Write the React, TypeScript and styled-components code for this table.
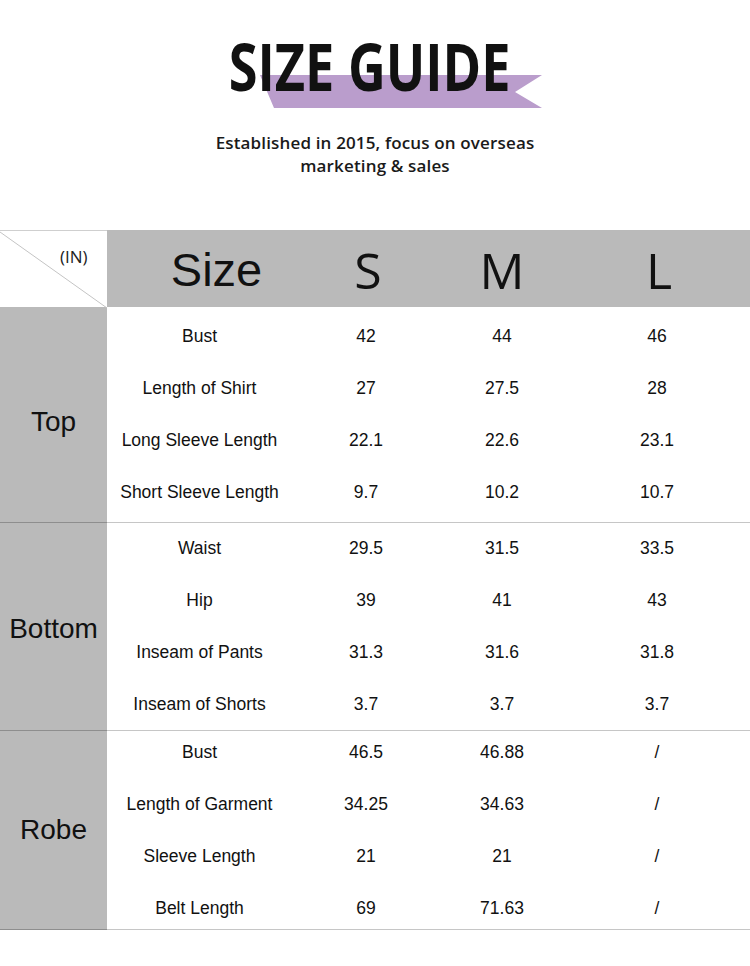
import styled, { createGlobalStyle } from 'styled-components';

const GlobalStyle = createGlobalStyle`
  html, body {
    margin: 0;
    padding: 0;
    background: #ffffff;
  }
  body {
    font-family: "Liberation Sans", Arial, sans-serif;
    color: #111111;
  }
`;

const Page = styled.div`
  width: 750px;
  height: 966px;
  overflow: hidden;
  background: #ffffff;
`;

const Heading = styled.div`
  position: relative;
  height: 99px;
  padding-top: 32px;
  box-sizing: border-box;
  text-align: center;
`;

const Ribbon = styled.svg`
  position: absolute;
  left: 0;
  top: 0;
  width: 750px;
  height: 120px;
`;

const Title = styled.h1`
  position: relative;
  margin: 0;
  display: inline-block;
  font-family: "Open Sans", "Noto Sans", sans-serif;
  font-weight: 700;
  font-size: 67px;
  line-height: 67px;
  color: #111111;
  transform: translateX(-5px) scaleX(0.78);
  transform-origin: 50% 50%;
`;

const Subtitle = styled.p`
  margin: 32px 0 0;
  text-align: center;
  font-family: "Open Sans", "Noto Sans", sans-serif;
  font-weight: 600;
  font-size: 17px;
  letter-spacing: 0.15px;
  line-height: 23px;
  color: #1a1a1a;
`;

const Table = styled.div`
  margin-top: 53px;
  width: 750px;
`;

const cols = '185px 148px 124px 186px';

const HeaderRow = styled.div`
  display: grid;
  grid-template-columns: 107px ${cols};
  height: 77px;
  background: #bababa;
`;

const Corner = styled.div`
  position: relative;
  background: #ffffff;
  border-top: 1px solid #cfcfcf;
`;

const Diagonal = styled.svg`
  position: absolute;
  left: 0;
  top: 0;
  width: 107px;
  height: 77px;
`;

const Unit = styled.span`
  position: absolute;
  left: 60px;
  top: 14px;
  font-family: "Open Sans", "Noto Sans", sans-serif;
  font-size: 17px;
  color: #222222;
`;

const HeadCell = styled.div<{ shift?: number; serif?: boolean }>`
  display: flex;
  align-items: center;
  justify-content: center;
  padding-left: ${({ shift }) => (shift ? `${shift}px` : '0')};
  font-family: ${({ serif }) => (serif ? '"Liberation Sans", Arial, sans-serif' : '"Open Sans", "Noto Sans", sans-serif')};
  font-size: ${({ serif }) => (serif ? '47px' : '50px')};
  color: #111111;
  padding-top: 2px;
`;

const Group = styled.div<{ h: number }>`
  display: grid;
  grid-template-columns: 107px 1fr;
  height: ${({ h }) => h}px;
  border-bottom: 1px solid #c6c6c6;
  box-sizing: border-box;
`;

const Category = styled.div<{ nudge?: number }>`
  display: flex;
  align-items: center;
  justify-content: center;
  background: #bababa;
  border-bottom: 1px solid #8e8e8e;
  margin-bottom: -1px;
  padding-top: ${({ nudge }) => (nudge ? `${nudge}px` : '0')};
  font-size: 28px;
  color: #111111;
`;

const Rows = styled.div`
  display: flex;
  flex-direction: column;
  justify-content: center;
  overflow: visible;
  min-height: 0;
`;

const Row = styled.div`
  display: grid;
  grid-template-columns: ${cols};
  height: 52px;
  flex-shrink: 0;
  align-items: center;
  text-align: center;
  font-size: 17.5px;
  color: #111111;
`;

type GroupData = { name: string; h: number; nudge?: number; rows: string[][] };

const groups: GroupData[] = [
  {
    name: 'Top',
    h: 216,
    nudge: 14,
    rows: [
      ['Bust', '42', '44', '46'],
      ['Length of Shirt', '27', '27.5', '28'],
      ['Long Sleeve Length', '22.1', '22.6', '23.1'],
      ['Short Sleeve Length', '9.7', '10.2', '10.7'],
    ],
  },
  {
    name: 'Bottom',
    h: 208,
    nudge: 4,
    rows: [
      ['Waist', '29.5', '31.5', '33.5'],
      ['Hip', '39', '41', '43'],
      ['Inseam of Pants', '31.3', '31.6', '31.8'],
      ['Inseam of Shorts', '3.7', '3.7', '3.7'],
    ],
  },
  {
    name: 'Robe',
    h: 199,
    rows: [
      ['Bust', '46.5', '46.88', '/'],
      ['Length of Garment', '34.25', '34.63', '/'],
      ['Sleeve Length', '21', '21', '/'],
      ['Belt Length', '69', '71.63', '/'],
    ],
  },
];

export default function App() {
  return (
    <Page>
      <GlobalStyle />
      <Heading>
        <Ribbon viewBox="0 0 750 120">
          <polygon points="260,75 542,75 515,92 542,108 274,108" fill="#ba9dcc" />
        </Ribbon>
        <Title>SIZE GUIDE</Title>
      </Heading>
      <Subtitle>
        Established in 2015, focus on overseas
        <br />
        marketing &amp; sales
      </Subtitle>

      <Table>
        <HeaderRow>
          <Corner>
            <Diagonal viewBox="0 0 107 77">
              <line x1="0" y1="1" x2="107" y2="77" stroke="#c4c4c4" strokeWidth="1" />
            </Diagonal>
            <Unit>(IN)</Unit>
          </Corner>
          <HeadCell serif shift={34}>Size</HeadCell>
          <HeadCell shift={4}>S</HeadCell>
          <HeadCell>M</HeadCell>
          <HeadCell shift={4}>L</HeadCell>
        </HeaderRow>

        {groups.map(g => (
          <Group key={g.name} h={g.h}>
            <Category nudge={g.nudge}>{g.name}</Category>
            <Rows>
              {g.rows.map((r, i) => (
                <Row key={i}>
                  {r.map((c, j) => (
                    <span key={j}>{c}</span>
                  ))}
                </Row>
              ))}
            </Rows>
          </Group>
        ))}
      </Table>
    </Page>
  );
}
